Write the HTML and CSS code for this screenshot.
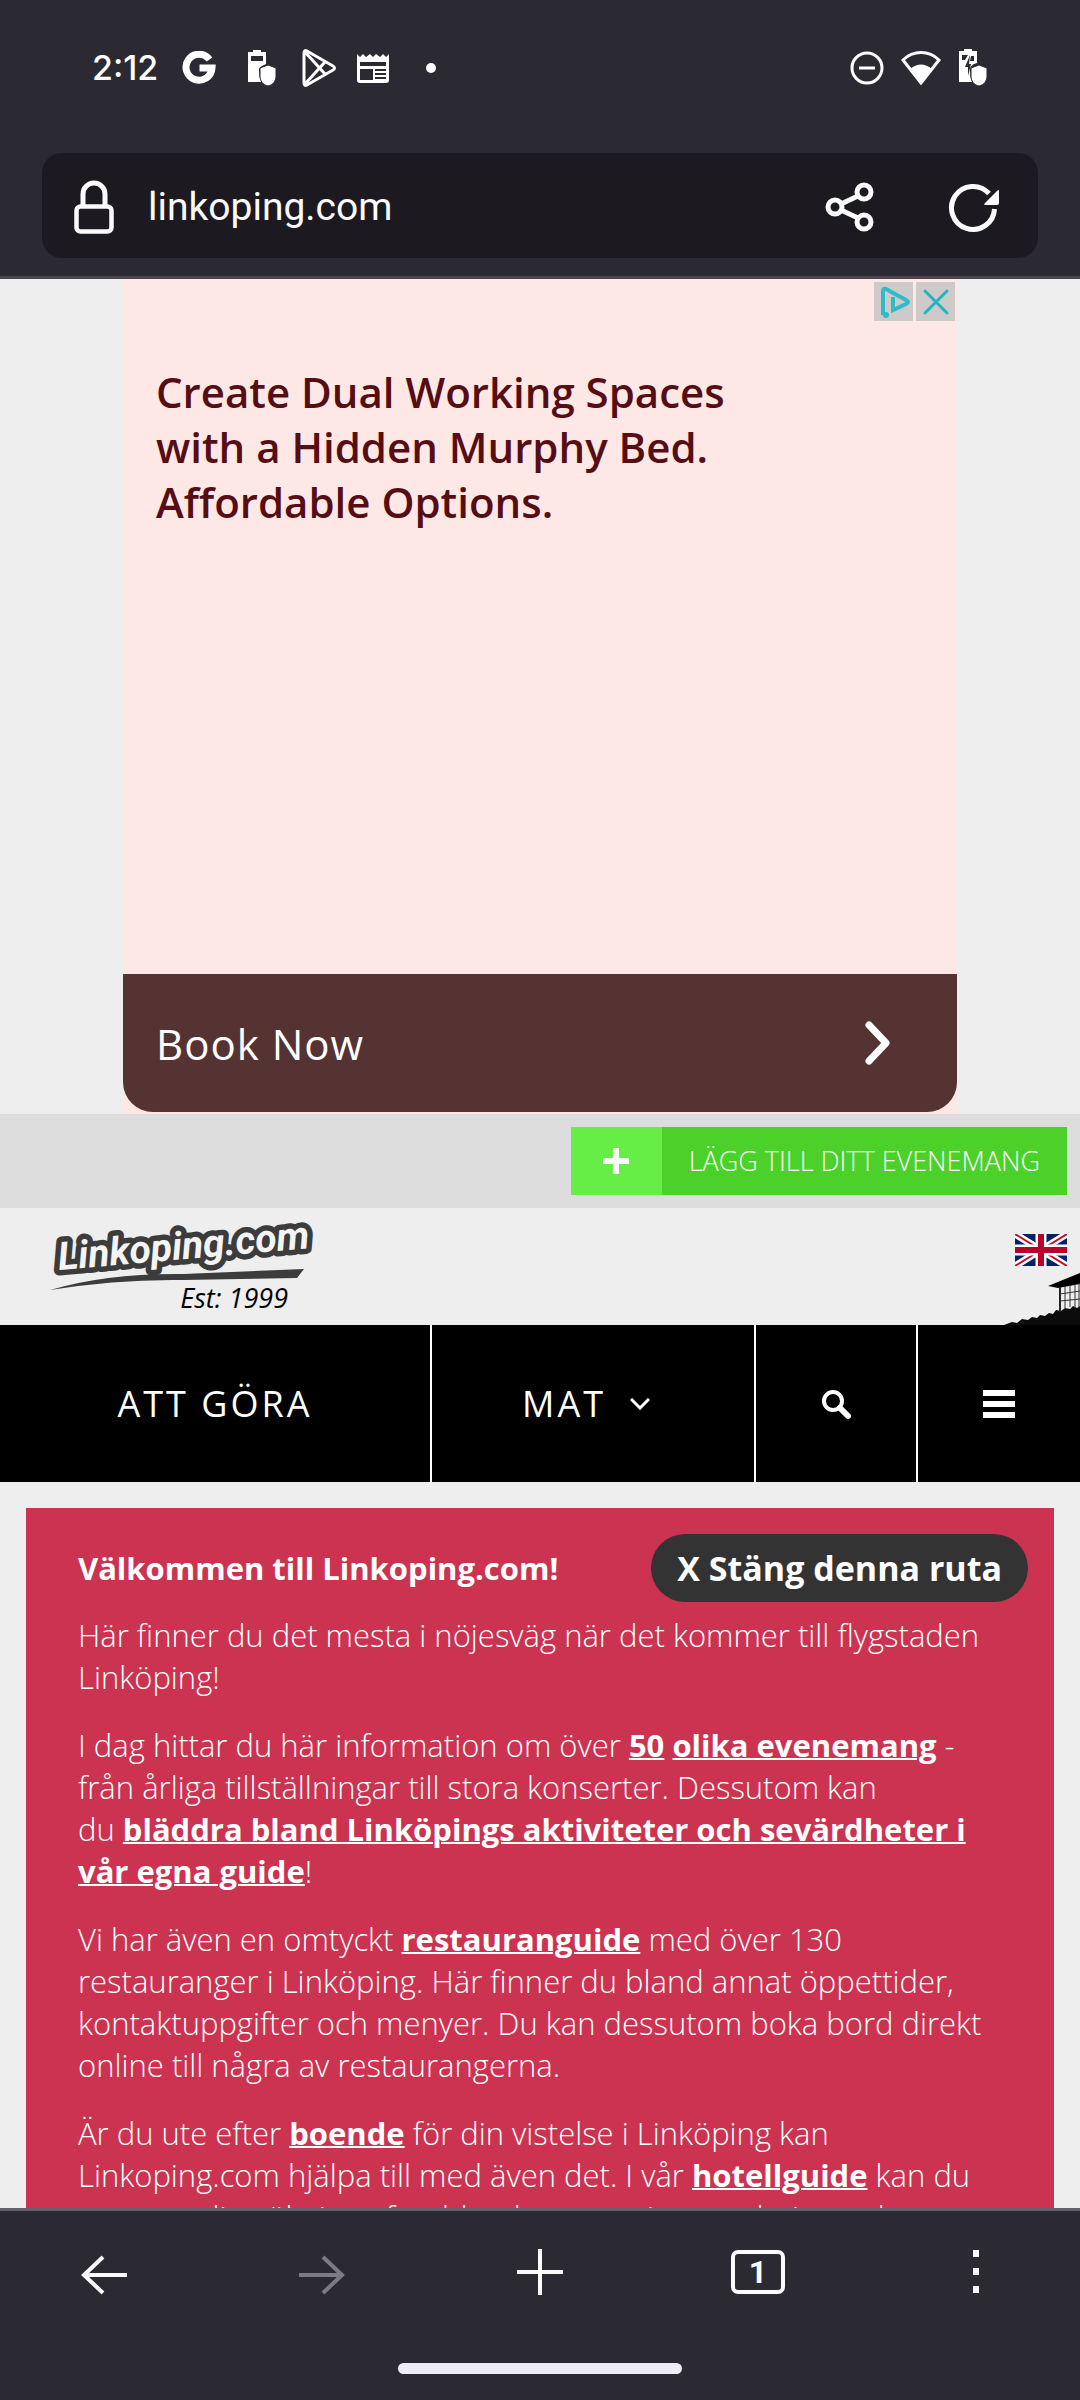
FILE: index.html
```html
<!DOCTYPE html>
<html lang="sv">
<head>
<meta charset="utf-8">
<meta name="viewport" content="width=device-width, initial-scale=1">
<title>Linkoping.com</title>
<link rel="stylesheet" href="styles.css">
</head>
<body>
<div class="app">
  <header class="chrome">
    <div class="status">
      <span class="clock">2:12</span>
      <svg class="status-icon g" width="34" height="34" viewBox="0 0 34 34"><path d="M27.500 8.500A13 13 0 1 0 30 17H17.500" fill="none" stroke="#fff" stroke-width="7"/></svg>
      <svg class="status-icon batt" width="30" height="38" viewBox="0 0 30 38"><path d="M6 3V1h8v2h5v12c-4 2-7 3-7 6 0 6 1 9 3 12H1V3zM4 7v5h12V7z" fill="#fff" fill-rule="evenodd"/><path d="M21 16l8 3v8c0 5-3 9-8 10-5-1-8-5-8-10v-8z" fill="#fff" stroke="#2b2932" stroke-width="1"/></svg>
      <svg class="status-icon play" width="34" height="38" viewBox="0 0 34 38"><path d="M2 4c0-2 1-3 3-2l26 15c2 1 2 3 0 4L5 36c-2 1-3 0-3-2zM3 3l20 22M3 35l20-22" fill="none" stroke="#fff" stroke-width="3"/></svg>
      <svg class="status-icon news" width="34" height="32" viewBox="0 0 34 32"><path d="M1 2l3 3 3-3 3 3 4-3 3 3 3-3 4 3 3-3 3 3 3-3v26q0 3-3 3H4q-3 0-3-3z" fill="#fff"/><path d="M4 10h26v4H4zM4 17h13v11H4zM19 17h11v2H19zM19 21h11v2H19zM19 25h11v2H19z" fill="#2b2932"/></svg>
      <span class="dot"></span>
      <svg class="status-icon dnd" width="34" height="34" viewBox="0 0 34 34"><circle cx="17" cy="17" r="15" fill="none" stroke="#fff" stroke-width="3"/><path d="M9 17h16" stroke="#fff" stroke-width="3"/></svg>
      <svg class="status-icon" width="40" height="34" viewBox="0 0 40 34"><path d="M2 9C12-1 28-1 38 9L20 32z" fill="none" stroke="#fff" stroke-width="3"/><path d="M9 18q11-9 22 0L20 33z" fill="#fff"/></svg>
      <svg class="status-icon" width="30" height="38" viewBox="0 0 30 38"><path d="M6 2V0h8v2h5v12c-4 1-7 3-7 7 0 6 1 9 2 12H1V2zM4 6v5h3l3-5zM13 7l-1 5h4V7z" fill="#fff" fill-rule="evenodd"/><path d="M12 6l-5 12h3v9l3-12h-2z" fill="#2b2932"/><path d="M21 16l8 3v8c0 5-3 9-8 10-5-1-8-5-8-10v-8z" fill="#fff" stroke="#2b2932" stroke-width="1"/></svg>
    </div>
    <div class="urlbar">
      <svg width="40" height="54" viewBox="0 0 40 54"><path d="M9 25V14a11 11 0 0 1 22 0v11" fill="none" stroke="#fbfbfe" stroke-width="5"/><rect x="2.500" y="26.500" width="35" height="25" rx="4" fill="none" stroke="#fbfbfe" stroke-width="4.500"/></svg>
      <a class="url" href="#">linkoping.com</a>
      <button class="icon-btn" aria-label="Dela"><svg width="50" height="50" viewBox="0 0 50 50" fill="none" stroke="#fbfbfe" stroke-width="5"><circle cx="11" cy="25" r="7"/><circle cx="40" cy="10" r="7"/><circle cx="40" cy="40" r="7"/><path d="M17 22l17-8M17 28l17 8"/></svg></button>
      <button class="icon-btn" aria-label="Ladda om"><svg width="52" height="50" viewBox="0 0 52 50"><path d="M41 11.500A21.500 21.500 0 1 0 46.500 27" fill="none" stroke="#fbfbfe" stroke-width="5"/><path d="M51 9v12q0 2-2 2H38q-3 0-1-2L49 9q2-2 2 0z" fill="#fbfbfe"/></svg></button>
    </div>
  </header>

  <main class="page">
    <section class="ad">
      <div class="ad-choices">
        <button class="ad-btn" aria-label="Annonsval"><svg width="39" height="39" viewBox="0 0 39 39"><path d="M9 33V9q0-3 3-2l20 11q4 2 0 4L19 28V15" fill="none" stroke="#2fbcc8" stroke-width="4"/><circle cx="12" cy="33" r="3" fill="#2fbcc8"/></svg></button>
        <button class="ad-btn" aria-label="Stäng annons"><svg width="39" height="39" viewBox="0 0 39 39"><path d="M9 9l22 22M31 9L9 31" stroke="#21b5c0" stroke-width="3" stroke-linecap="round"/></svg></button>
      </div>
      <h2 class="ad-title">Create Dual Working Spaces<br>with a Hidden Murphy Bed.<br>Affordable Options.</h2>
      <a class="ad-cta" href="#"><span>Book Now</span><svg width="26" height="44" viewBox="0 0 26 44"><path d="M4 4l17 18L4 40" fill="none" stroke="#fff" stroke-width="7" stroke-linecap="round" stroke-linejoin="round"/></svg></a>
    </section>

    <div class="topbar">
      <a class="add-event" href="#">
        <span class="add-plus"><svg width="26" height="26" viewBox="0 0 26 26"><path d="M13 0v26M0 13h26" stroke="#fff" stroke-width="6"/></svg></span>
        <span class="add-label">LÄGG TILL DITT EVENEMANG</span>
      </a>
    </div>

    <div class="masthead">
      <a class="brand" href="#">
        <svg class="logo" width="270" height="80" viewBox="0 0 270 80"><path d="M2 77Q60 60 135 61L256 56l-7 9-114 2Q70 66 2 77z" fill="#3c3c3c"/><g transform="rotate(-5 12 58)"><text class="logo-text logo-halo" x="11" y="57">Linkoping.com</text><text class="logo-text" x="11" y="57" aria-hidden="true">Linkoping.com</text></g></svg>
        <span class="est">Est: 1999</span>
      </a>
      <svg class="castle" width="76" height="52" viewBox="0 0 76 52"><path d="M0 52l8-3 5 1 5-4 6 1 4-3 5 1 3-3 5 1 4-3 4 1 3-4 5 1 4-3 5 1 3-3 4 2 3-2v20z" fill="#0c0c0c"/><path d="M44 13L76 0v11L54 15z" fill="#000"/><path d="M56 14v25" stroke="#222" stroke-width="2"/><path d="M61 13v22M66 12v22M71 11v24M75 10v25M56 21l20-3M56 28l20-2" stroke="#333" stroke-width="1"/></svg>
      <a class="lang" href="#" aria-label="English"><svg width="52" height="32" viewBox="0 0 52 32"><path d="M0 0h52v32H0z" fill="#012169"/><path d="M0 0l52 32M52 0L0 32" stroke="#fff" stroke-width="7"/><path d="M0 0l26 16M52 0L26 16M0 32l26-16M52 32L26 16" stroke="#c8102e" stroke-width="2"/><path d="M26 0v32M0 16h52" stroke="#fff" stroke-width="11"/><path d="M26 0v32M0 16h52" stroke="#b8002b" stroke-width="6"/></svg></a>
    </div>

    <nav class="menu">
      <a href="#">ATT GÖRA</a>
      <a class="has-sub" href="#">MAT<svg width="20" height="12" viewBox="0 0 20 12"><path d="M1 1l9 9 9-9" fill="none" stroke="#fff" stroke-width="3"/></svg></a>
      <button aria-label="Sök"><svg width="30" height="30" viewBox="0 0 30 30"><circle cx="12" cy="12" r="9" fill="none" stroke="#fff" stroke-width="4"/><path d="M19 19l8 8" stroke="#fff" stroke-width="6" stroke-linecap="round"/></svg></button>
      <button aria-label="Meny"><svg width="32" height="28" viewBox="0 0 32 28"><path d="M0 3h32M0 14h32M0 25h32" stroke="#fff" stroke-width="6"/></svg></button>
    </nav>

    <section class="welcome">
      <div class="welcome-head">
        <h1>Välkommen till Linkoping.com!</h1>
        <button class="close">X Stäng denna ruta</button>
      </div>
      <p>Här finner du det mesta i nöjesväg när det kommer till flygstaden Linköping!</p>
      <p>I dag hittar du här information om över <a href="#">50</a> <a href="#">olika evenemang</a> - från årliga tillställningar till stora konserter. Dessutom kan du&nbsp;<a href="#">bläddra bland Linköpings aktiviteter och sevärdheter i vår egna guide</a>!</p>
      <p>Vi har även en omtyckt <a href="#">restauranguide</a> med över 130 restauranger i Linköping. Här finner du bland annat öppettider, kontaktuppgifter och menyer. Du kan dessutom boka bord direkt online till några av restaurangerna.</p>
      <p>Är du ute efter <a href="#">boende</a> för din vistelse i Linköping kan Linkoping.com hjälpa till med även det. I vår <a href="#">hotellguide</a> kan du anpassa din sökning efter bland annat pris, popularitet och</p>
    </section>
  </main>

  <footer class="toolbar">
    <nav class="tools">
      <button aria-label="Bakåt"><svg width="46" height="46" viewBox="0 0 46 46"><path d="M46 26H4M22 8L3 26l19 18" fill="none" stroke="#fbfbfe" stroke-width="4"/></svg></button>
      <button aria-label="Framåt" disabled><svg width="46" height="46" viewBox="0 0 46 46"><path d="M0 26h42M24 8l19 18-19 18" fill="none" stroke="#7d7a84" stroke-width="4"/></svg></button>
      <button aria-label="Ny flik"><svg width="46" height="46" viewBox="0 0 46 46"><path d="M23 0v46M0 23h46" stroke="#fbfbfe" stroke-width="4"/></svg></button>
      <button class="tabs" aria-label="Flikar">1</button>
      <button aria-label="Mer"><svg width="8" height="44" viewBox="0 0 8 44"><path d="M1 0h6v7H1zM1 18h6v7H1zM1 36h6v7H1z" fill="#fbfbfe"/></svg></button>
    </nav>
    <div class="handle"></div>
  </footer>
</div>
</body>
</html>
```
FILE: styles.css
```css
* { box-sizing: border-box; }
body { margin: 0; font-family: "Open Sans", sans-serif; background: #eee; }
button { margin: 0; padding: 0; border: 0; background: none; font-family: inherit; color: inherit; }
svg { display: block; flex: none; }
a { color: inherit; text-decoration: none; }

.app { display: flex; flex-direction: column; height: 100vh; }

.chrome { flex: none; padding: 50px 42px 18px; background: #2b2932; border-bottom: 3px solid #4b4450; }
.status { display: flex; align-items: center; height: 36px; padding: 0 50px; margin-bottom: 67px; }
.clock { font: 500 34px/36px Inter, sans-serif; color: #fff; margin-right: 24px; }
.status .batt { margin-left: 31px; }
.status .play { margin-left: 25px; }
.status .news { margin-left: 20px; }
.dot { width: 10px; height: 10px; border-radius: 50%; background: #fff; margin-left: 36px; }
.dnd { margin-left: auto; }
.dnd ~ .status-icon { margin-left: 17px; }
.urlbar { display: flex; align-items: center; height: 105px; padding: 2px 38px 0 32px; background: #1c1a20; border-radius: 20px; }
.url { flex: 1; margin-left: 34px; font: 400 39px/48px Roboto, sans-serif; color: #fbfbfe; }
.icon-btn + .icon-btn { margin-left: 74px; }

.page { flex: 1; min-height: 0; overflow-y: auto; scrollbar-width: none; background: #eee; }

.ad { position: relative; display: flex; flex-direction: column; justify-content: space-between; width: 834px; max-width: 100%; min-height: 835px; margin: 0 auto; padding: 85px 0 2px; background: #fde8e6; }
.ad-choices { position: absolute; top: 3px; right: 2px; display: flex; gap: 3px; }
.ad-btn { background: #cfcaca; }
.ad-title { margin: 0 33px; font-size: 42px; font-weight: 600; line-height: 55px; color: #560d14; }
.ad-cta { display: flex; align-items: center; justify-content: space-between; height: 138px; padding: 0 66px 0 33px; background: #543332; border-radius: 0 0 30px 30px; color: #fff; font-size: 42px; letter-spacing: 1px; }

.topbar { display: flex; justify-content: flex-end; padding: 13px; background: #ddd; }
.add-event { display: flex; height: 68px; line-height: 68px; color: #fff; background: #4bd12a; }
.add-plus { display: flex; align-items: center; justify-content: center; width: 91px; background: #66ee46; }
.add-label { padding: 0 27px; font-size: 27px; font-weight: 300; }

.masthead { position: relative; display: flex; justify-content: space-between; align-items: flex-start; height: 117px; padding: 0 13px 0 48px; }
.brand { display: flex; flex-direction: column; padding-top: 5px; }
.logo-text { font: italic 700 39px Roboto, sans-serif; fill: #f4f4f4; }
.logo-halo { fill: #3c3c3c; stroke: #3c3c3c; stroke-width: 11px; stroke-linejoin: round; }
.est { align-self: flex-end; margin: -10px 30px 0 0; font-size: 27px; font-style: italic; line-height: 30px; color: #000; }
.castle { position: absolute; right: 0; bottom: 0; }
.lang { margin-top: 26px; }

.menu { display: grid; grid-template-columns: 40fr 30fr 15fr 15fr; height: 157px; background: #000; color: #fff; }
.menu > * { display: flex; align-items: center; justify-content: center; gap: 24px; font-size: 36px; letter-spacing: 3px; }
.menu > *:not(:last-child) { border-right: 2px solid #fff; }
.menu .has-sub { padding-right: 14px; }

.welcome { margin: 26px 26px 0; padding: 26px; background: #cb3351; color: #fff; }
.welcome-head { display: flex; align-items: center; justify-content: space-between; padding-left: 26px; }
.welcome h1 { margin: 0; font-size: 31px; line-height: 42px; }
.close { height: 68px; padding: 0 26px; border-radius: 34px; background: #333; font-size: 34px; font-weight: 700; }
.welcome p { margin: 0 26px 26px; font-size: 31px; font-weight: 300; line-height: 42px; }
.welcome-head + p { margin-top: 12px; }
.welcome p a { font-weight: 700; text-decoration: underline; text-decoration-thickness: 2px; }

.toolbar { flex: none; padding: 38px 77px 26px; background: #2b2932; border-top: 3px solid #66626b; }
.tools { display: flex; align-items: center; justify-content: space-between; }
.tools button { display: flex; align-items: center; justify-content: center; width: 54px; }
.tools .tabs { height: 44px; border: 4px solid #fbfbfe; border-radius: 7px; color: #fbfbfe; font: 700 32px/36px Roboto, sans-serif; }
.handle { width: 284px; height: 11px; margin: 68px auto 0; border-radius: 6px; background: #efecf5; }
```
